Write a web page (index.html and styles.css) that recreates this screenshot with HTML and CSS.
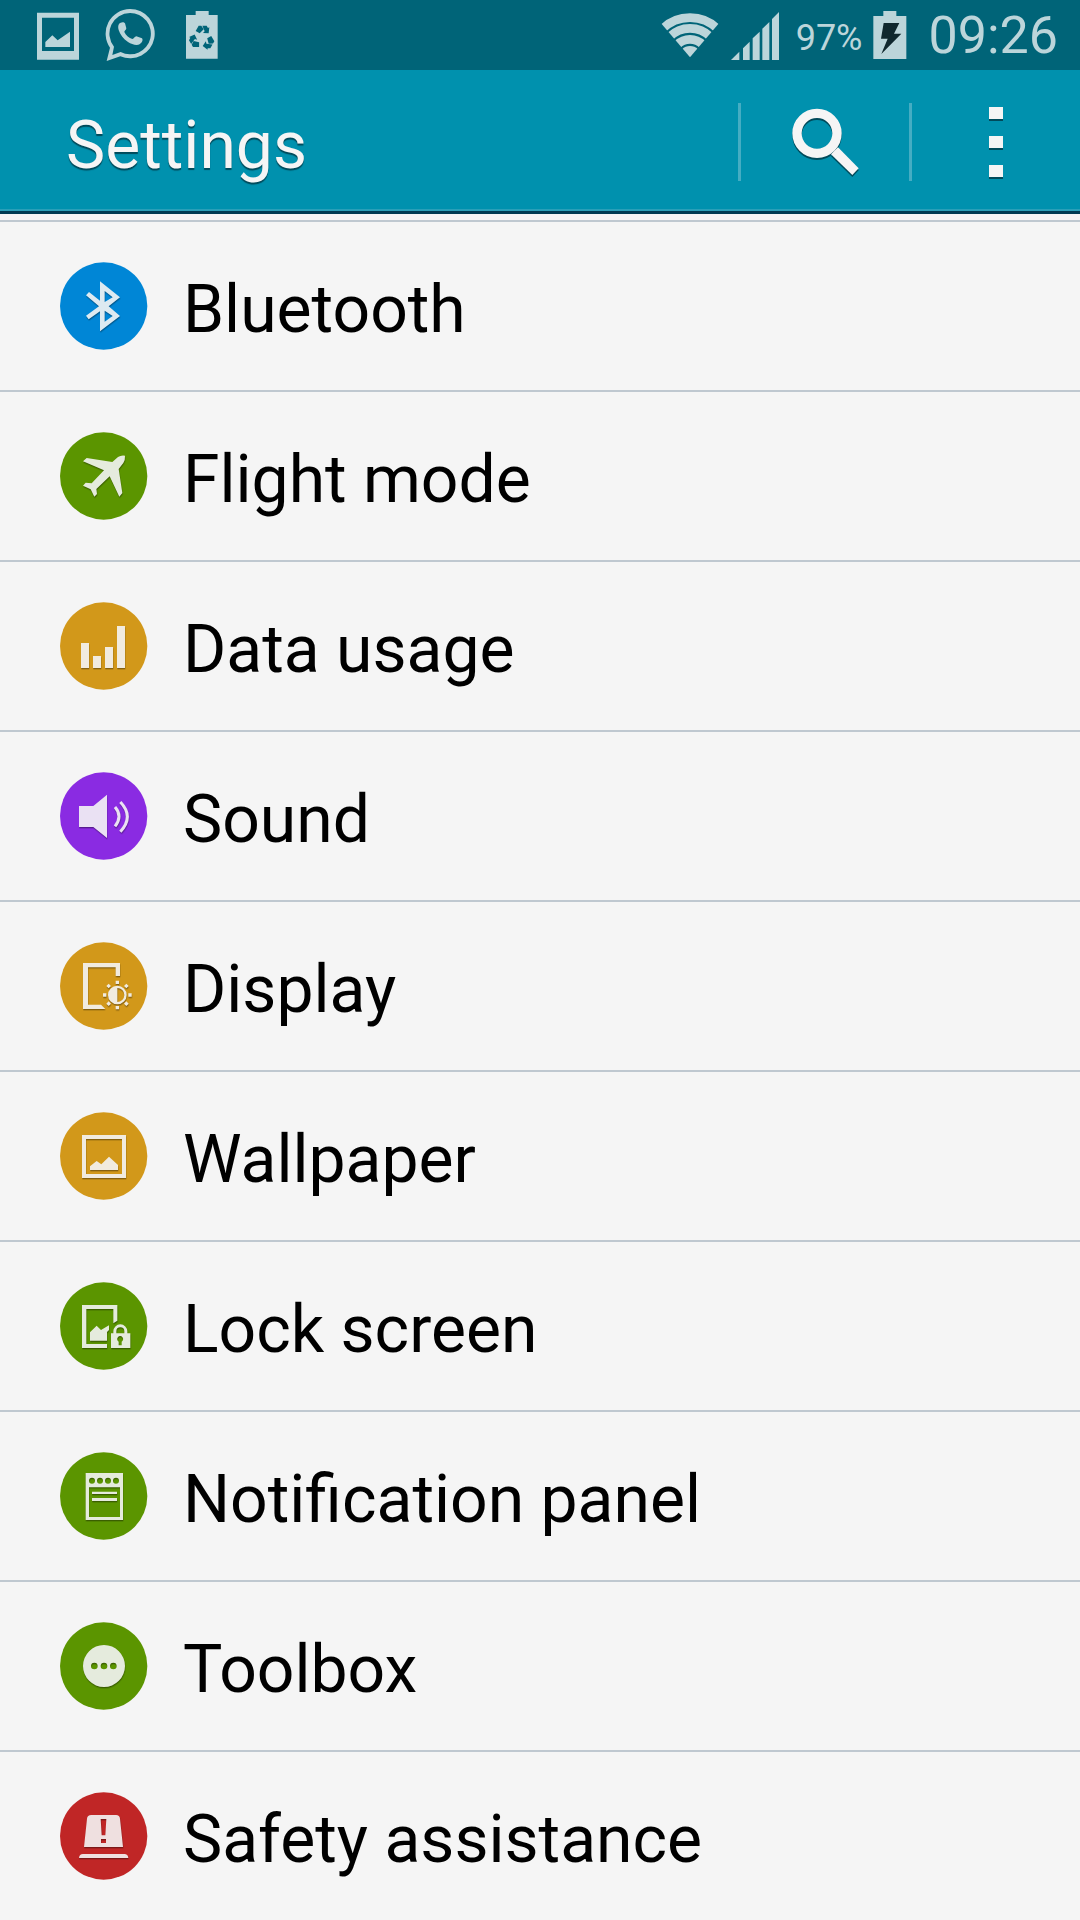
FILE: index.html
```html
<!DOCTYPE html>
<html lang="en">

<head>
  <meta charset="utf-8">
  <meta name="viewport" content="width=device-width, initial-scale=1">
  <title>Settings</title>
  <link rel="stylesheet" href="styles.css">
</head>

<body>
  <div class="status-bar">
    <div class="status-group notifications">
      <!-- picture -->
      <svg class="status-icon" width="44" height="54" viewBox="108 24 132 162" aria-hidden="true">
        <path fill-rule="evenodd" d="M111 38H237V179H111ZM126 53V153H222V53Z" />
        <path d="M136 141V126L157 106L173 121L210 95V141Z" />
      </svg>
      <!-- chat -->
      <svg class="status-icon" width="52" height="54" viewBox="312 27 156 162" aria-hidden="true">
        <path fill-rule="evenodd" d="M390 30A74 74 0 1 1 361 172L320 186L330 146A74 74 0 0 1 390 30ZM390 42A62 62 0 0 0 342 143L337 168L362 159A62 62 0 1 0 390 42Z" />
        <path d="M357 75C361 69 372 67 375 73L379 88C379 93 372 96 373 99C378 110 387 117 397 120C402 120 404 112 409 112L426 118C430 123 426 131 420 135C410 141 396 136 384 129C370 120 360 106 356 93C354 86 354 80 357 75Z" />
      </svg>
      <!-- recycle battery -->
      <svg class="status-icon" width="44" height="54" viewBox="541 27 132 162" aria-hidden="true">
        <path d="M559 48H588V36H627V48H654V179H559Z" />
        <g class="recycle">
          <path id="arrow" d="M588 96L597 80H605L612 91L600 103ZM608 80H621L625 87L629 85L627 103L610 102L615 97Z" />
          <use href="#arrow" transform="rotate(120 607 117)" />
          <use href="#arrow" transform="rotate(240 607 117)" />
        </g>
      </svg>
    </div>
    <div class="status-group">
      <!-- wifi -->
      <svg class="status-icon" width="60" height="54" viewBox="59 24 180 162" aria-hidden="true">
        <clipPath id="fan">
          <path d="M149 172L30 32H268Z" />
        </clipPath>
        <g clip-path="url(#fan)">
          <circle cx="149" cy="172" r="34" />
          <g class="wave">
            <circle cx="149" cy="172" r="54" />
            <circle cx="149" cy="172" r="87" />
            <circle cx="149" cy="172" r="119" />
          </g>
        </g>
      </svg>
      <!-- signal -->
      <svg class="status-icon" width="50" height="54" viewBox="270 24 150 162" aria-hidden="true">
        <path d="M273 180L298 155V180ZM309 180V145L329 125V180ZM338 180V115L359 95V180ZM367 180V86L388 66V180ZM396 180V57L417 36V180Z" />
      </svg>
      <span class="percent">97%</span>
      <!-- charging -->
      <svg class="status-icon" width="34" height="54" viewBox="695 24 102 162" aria-hidden="true">
        <path d="M696 48H726V33H765V48H795V177H696Z" />
        <path class="bolt" d="M727 69H774L758 101H780L720 162L739 116H719Z" />
      </svg>
      <span class="clock">09:26</span>
    </div>
  </div>

  <header class="action-bar">
    <h1>Settings</h1>
    <button type="button" aria-label="Search">
      <svg width="72" height="72" viewBox="447 318 216 216" aria-hidden="true">
        <circle class="lens" cx="531" cy="400" r="60" />
        <path d="M594 442L656 505L637 525L573 463Z" />
      </svg>
    </button>
    <button type="button" aria-label="More options">
      <svg width="72" height="72" viewBox="960 318 216 216" aria-hidden="true">
        <path d="M1047 321H1089V357H1047ZM1047 408H1089V444H1047ZM1047 495H1089V531H1047Z" />
      </svg>
    </button>
  </header>

  <nav class="settings">
    <a href="#bluetooth">
      <svg class="icon blue" viewBox="30 36 264 264" aria-hidden="true">
        <circle cx="161" cy="168" r="131" />
        <g class="glyph">
          <path fill-rule="evenodd" d="M150 94L210 142L176 169L210 198L150 244V184L116 208L108 197L147 169L108 136L117 126L150 152ZM164 123V156L188 142ZM164 182V215L188 198Z" />
        </g>
      </svg>
      <span>Bluetooth</span>
    </a>
    <a href="#flight-mode">
      <svg class="icon green" viewBox="30 36 264 264" aria-hidden="true">
        <circle cx="161" cy="168" r="131" />
        <g class="glyph">
          <path d="M187 126L204 111Q213 105 225 107Q226 119 220 129L206 147L217 219L208 230L179 169L139 207L141 222L133 230L122 208L99 197L107 188L125 190L162 151L99 124L110 114Z" />
        </g>
      </svg>
      <span>Flight mode</span>
    </a>
    <a href="#data-usage">
      <svg class="icon amber" viewBox="30 36 264 264" aria-hidden="true">
        <circle cx="161" cy="168" r="131" />
        <g class="glyph">
          <path d="M93 159H117V234H93ZM129 198H153V234H129ZM165 171H189V234H165ZM201 108H225V234H201Z" />
        </g>
      </svg>
      <span>Data usage</span>
    </a>
    <a href="#sound">
      <svg class="icon purple" viewBox="30 36 264 264" aria-hidden="true">
        <circle cx="161" cy="168" r="131" />
        <g class="glyph">
          <path d="M87 138H130L171 104V234L130 201H87Z" />
          <path class="line" d="M195 141Q219 169 195 199M211 126Q253 170 211 215" />
        </g>
      </svg>
      <span>Sound</span>
    </a>
    <a href="#display">
      <svg class="icon amber" viewBox="30 36 264 264" aria-hidden="true">
        <circle cx="161" cy="168" r="131" />
        <g class="glyph">
          <path d="M99 99H210V138H197V112H114V224H153L166 237H99Z" />
          <path fill-rule="evenodd" d="M202 167A28 28 0 1 1 202 223A28 28 0 1 1 202 167ZM202 174V216A21 21 0 0 0 202 174Z" />
          <path d="M197 152H207V162H197ZM197 228H207V238H197ZM159 190H169V200H159ZM235 190H245V200H235ZM176 161L183 168L176 175L169 168ZM229 161L236 168L229 175L222 168ZM176 214L183 221L176 228L169 221ZM229 214L236 221L229 228L222 221Z" />
        </g>
      </svg>
      <span>Display</span>
    </a>
    <a href="#wallpaper">
      <svg class="icon amber" viewBox="30 36 264 264" aria-hidden="true">
        <circle cx="161" cy="168" r="131" />
        <g class="glyph">
          <path fill-rule="evenodd" d="M96 105H228V234H96ZM108 117V222H216V117Z" />
          <path d="M120 210V199L140 183L154 193L177 170L204 195V210Z" />
        </g>
      </svg>
      <span>Wallpaper</span>
    </a>
    <a href="#lock-screen">
      <svg class="icon green" viewBox="30 36 264 264" aria-hidden="true">
        <circle cx="161" cy="168" r="131" />
        <g class="glyph">
          <path d="M96 105H202V152L190 160V117H109V222H171V234H96Z" />
          <path d="M120 212V187L140 167L153 180L177 166V180L171 186V212Z" />
          <path fill-rule="evenodd" d="M183 190H190V184A21 21 0 0 1 232 184V190H241V234H183ZM199 190H223V184A12 12 0 0 0 199 184ZM206 226H215V215A9 9 0 1 0 206 215Z" />
        </g>
      </svg>
      <span>Lock screen</span>
    </a>
    <a href="#notification-panel">
      <svg class="icon green" viewBox="30 36 264 264" aria-hidden="true">
        <circle cx="161" cy="168" r="131" />
        <g class="glyph">
          <path fill-rule="evenodd" d="M107 99H219V240H107ZM117 142V231H210V142ZM117 122A9 9 0 0 0 135 122A9 9 0 0 0 117 122ZM141 122A9 9 0 0 0 159 122A9 9 0 0 0 141 122ZM165 122A9 9 0 0 0 183 122A9 9 0 0 0 165 122ZM189 122A9 9 0 0 0 207 122A9 9 0 0 0 189 122Z" />
          <path d="M126 155H201V162H126ZM126 174H201V183H126Z" />
        </g>
      </svg>
      <span>Notification panel</span>
    </a>
    <a href="#toolbox">
      <svg class="icon green" viewBox="30 36 264 264" aria-hidden="true">
        <circle cx="161" cy="168" r="131" />
        <g class="glyph">
          <path fill-rule="evenodd" d="M99 168A63 63 0 0 0 225 168A63 63 0 0 0 99 168ZM123 168A10 10 0 0 0 143 168A10 10 0 0 0 123 168ZM152 168A10 10 0 0 0 172 168A10 10 0 0 0 152 168ZM180 168A10 10 0 0 0 200 168A10 10 0 0 0 180 168Z" />
        </g>
      </svg>
      <span>Toolbox</span>
    </a>
    <a href="#safety-assistance">
      <svg class="icon red" viewBox="30 36 264 264" aria-hidden="true">
        <circle cx="161" cy="168" r="131" />
        <g class="glyph">
          <path fill-rule="evenodd" d="M102 201L111 116Q112 105 124 105H198Q209 105 210 116L219 201ZM152 117L155 166H166L169 117ZM153 177V189H168V177Z" />
          <path d="M87 234Q88 222 99 222H223Q234 222 235 234Z" />
        </g>
      </svg>
      <span>Safety assistance</span>
    </a>
  </nav>
</body>

</html>
```

FILE: styles.css
```css
* {
  box-sizing: border-box;
}

body {
  margin: 0;
  background: #f5f5f5;
  color: #000;
  font-family: Roboto, "Liberation Sans", sans-serif;
}

.status-bar {
  display: flex;
  justify-content: space-between;
  height: 70px;
  padding: 0 22px 0 36px;
  background: #006478;
  color: #bcd5da;
}

.status-group {
  display: flex;
  align-items: center;
  gap: 10px;
}

.notifications {
  gap: 24px;
}

.status-icon {
  fill: #bcd5da;
}

.recycle {
  fill: #006478;
}

.wave {
  fill: none;
  stroke: #bcd5da;
  stroke-width: 26px;
}

.bolt {
  fill: #10282e;
}

.percent {
  padding: 6px 0 0 6px;
  font-size: 36px;
}

.clock {
  padding-left: 12px;
  font-size: 52px;
}

.action-bar {
  display: flex;
  align-items: center;
  height: 144px;
  padding-left: 66px;
  background: #0091ae;
  box-shadow: inset 0 -3px #003a52, inset 0 -5px #2a9fb8;
}

.action-bar h1 {
  flex: 1;
  margin: 0;
  padding-top: 6px;
  color: #f5f5f5;
  font-size: 66px;
  font-weight: 400;
  text-shadow: 0 2px 1px #004a5a;
}

.action-bar button {
  display: flex;
  align-items: center;
  justify-content: center;
  width: 171px;
  height: 78px;
  padding: 0;
  border: none;
  border-left: 3px solid #45adc3;
  background: none;
  cursor: pointer;
}

.action-bar svg {
  fill: #f5f5f5;
  filter: drop-shadow(0 2px 0 #004a5a);
}

.action-bar .lens {
  fill: none;
  stroke: #f5f5f5;
  stroke-width: 28px;
}

.settings {
  margin-top: 6px;
  border-top: 2px solid #bfc8d0;
}

.settings a {
  display: flex;
  align-items: center;
  gap: 35px;
  height: 170px;
  padding-left: 60px;
  border-bottom: 2px solid #bfc8d0;
  color: #000;
  font-size: 66px;
  text-decoration: none;
}

.settings a:last-child {
  height: 168px;
  border-bottom: none;
}

.settings span {
  padding-top: 6px;
}

.icon {
  width: 88px;
  height: 88px;
}

.glyph {
  fill: #f5f5f5;
  opacity: 0.9;
  filter: drop-shadow(1px 4px 1px rgba(0, 0, 0, 0.4));
}

.line {
  fill: none;
  stroke: #f5f5f5;
  stroke-width: 9px;
}

.blue {
  fill: #0086d6;
}

.green {
  fill: #5b9500;
}

.amber {
  fill: #d2981a;
}

.purple {
  fill: #8a2be2;
}

.red {
  fill: #c02626;
}
```
